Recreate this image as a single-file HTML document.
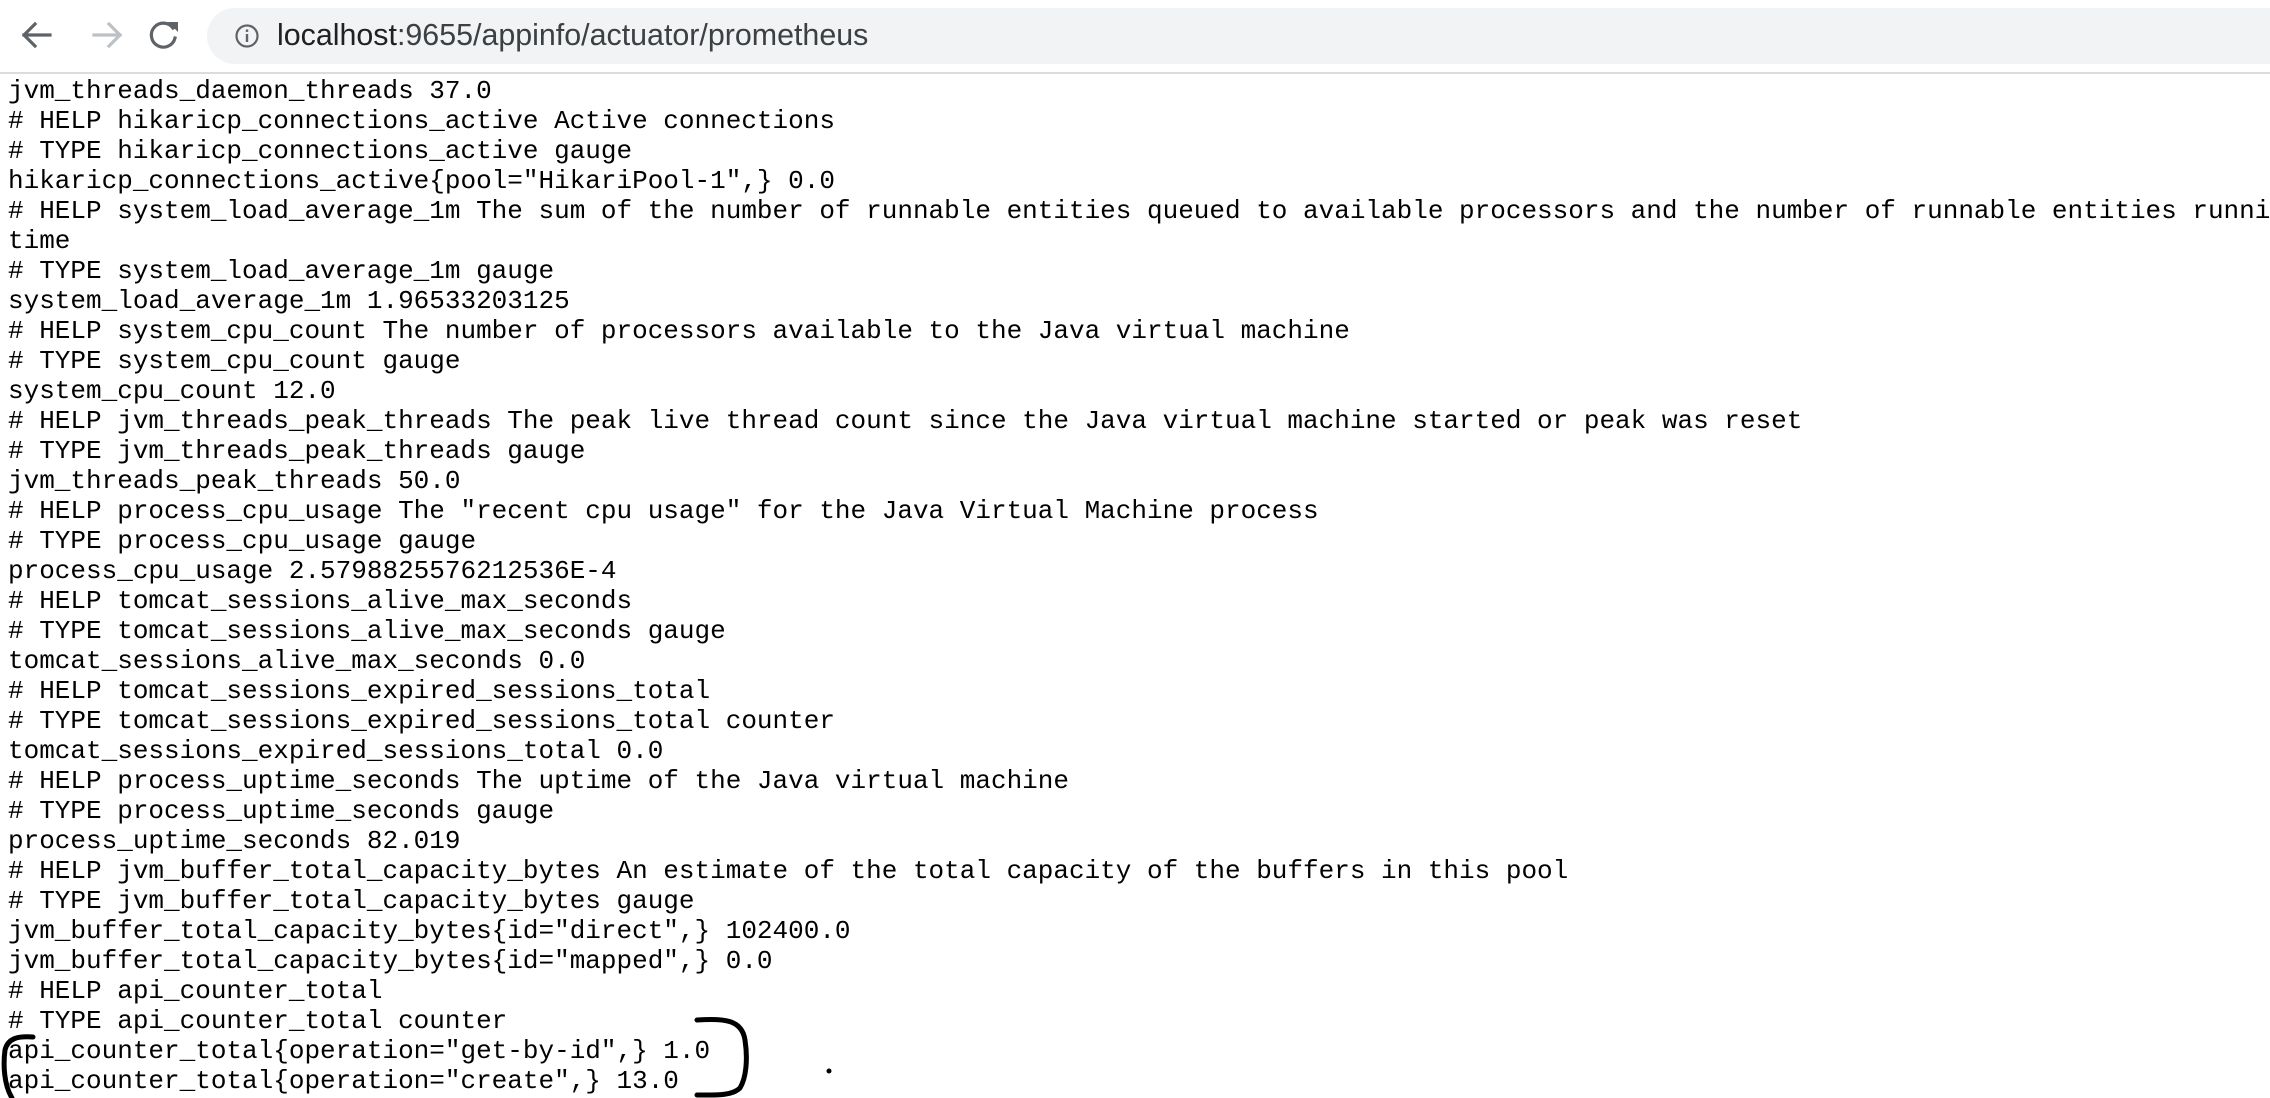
<!DOCTYPE html>
<html><head><meta charset="utf-8"><style>
html,body{margin:0;padding:0;background:#fff;width:2270px;height:1098px;overflow:hidden;position:relative}
.bar{position:absolute;left:0;top:0;width:2270px;height:72px;background:#fff;border-bottom:2px solid #dadce0}
.omni{position:absolute;left:207px;top:8px;width:2063px;height:56px;border-radius:28px 0 0 28px;background:#f1f3f4}
.url{position:absolute;left:277px;top:15px;font:30.4px "Liberation Sans",sans-serif;color:#3c4043;line-height:40px}
.url b{font-weight:normal;color:#202124}
pre{position:absolute;left:8px;top:76px;width:2262px;overflow:hidden;margin:0;font:26px/30px "Liberation Mono",monospace;color:#000;white-space:pre}
svg{position:absolute;left:0;top:0}
</style></head><body>
<div class="bar"><div class="omni"></div><div class="url"><b>localhost</b>:9655/appinfo/actuator/prometheus</div></div>
<pre>jvm_threads_daemon_threads 37.0
# HELP hikaricp_connections_active Active connections
# TYPE hikaricp_connections_active gauge
hikaricp_connections_active{pool="HikariPool-1",} 0.0
# HELP system_load_average_1m The sum of the number of runnable entities queued to available processors and the number of runnable entities running on the available processors averaged over a period of
time
# TYPE system_load_average_1m gauge
system_load_average_1m 1.96533203125
# HELP system_cpu_count The number of processors available to the Java virtual machine
# TYPE system_cpu_count gauge
system_cpu_count 12.0
# HELP jvm_threads_peak_threads The peak live thread count since the Java virtual machine started or peak was reset
# TYPE jvm_threads_peak_threads gauge
jvm_threads_peak_threads 50.0
# HELP process_cpu_usage The "recent cpu usage" for the Java Virtual Machine process
# TYPE process_cpu_usage gauge
process_cpu_usage 2.5798825576212536E-4
# HELP tomcat_sessions_alive_max_seconds
# TYPE tomcat_sessions_alive_max_seconds gauge
tomcat_sessions_alive_max_seconds 0.0
# HELP tomcat_sessions_expired_sessions_total
# TYPE tomcat_sessions_expired_sessions_total counter
tomcat_sessions_expired_sessions_total 0.0
# HELP process_uptime_seconds The uptime of the Java virtual machine
# TYPE process_uptime_seconds gauge
process_uptime_seconds 82.019
# HELP jvm_buffer_total_capacity_bytes An estimate of the total capacity of the buffers in this pool
# TYPE jvm_buffer_total_capacity_bytes gauge
jvm_buffer_total_capacity_bytes{id="direct",} 102400.0
jvm_buffer_total_capacity_bytes{id="mapped",} 0.0
# HELP api_counter_total
# TYPE api_counter_total counter
api_counter_total{operation="get-by-id",} 1.0
api_counter_total{operation="create",} 13.0</pre>
<svg width="2270" height="1098">
<g fill="none" stroke-width="3.2" stroke-linecap="square">
<path d="M24 35H50M24 35L35 24M24 35L35 46" stroke="#5f6368"/>
<path d="M94 35H120M120 35L109 24M120 35L109 46" stroke="#bdc1c6"/>
<path d="M173 28A12 12 0 1 0 175 38" stroke="#5f6368"/>
</g>
<path d="M168 22L178 22L178 32Z" fill="#5f6368"/>
<circle cx="247" cy="36" r="10.5" fill="none" stroke="#5f6368" stroke-width="2.2"/>
<rect x="245.8" y="34" width="2.4" height="8" fill="#5f6368"/><rect x="245.8" y="29.5" width="2.4" height="2.4" fill="#5f6368"/>
<path d="M697 1020C725 1018 742 1020 745 1040C748 1060 746 1078 740 1088C732 1096 715 1095 697 1095" fill="none" stroke="#000" stroke-width="5" stroke-linecap="round"/>
<path d="M33 1037C18 1036 8 1038 5 1050C3 1065 4 1085 12 1098" fill="none" stroke="#000" stroke-width="5" stroke-linecap="round"/>
<circle cx="829" cy="1071" r="2.5" fill="#000"/>
</svg>
</body></html>
